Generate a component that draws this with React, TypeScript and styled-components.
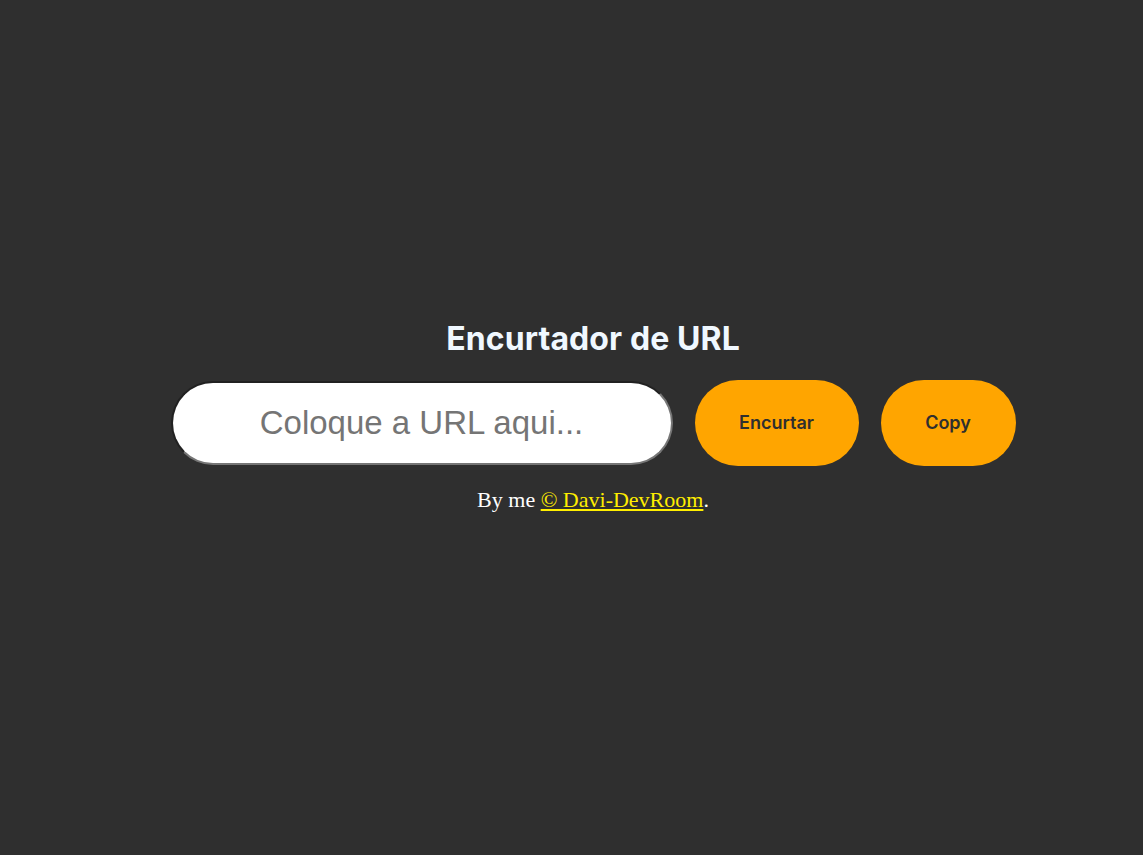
import React from "react";
import styled, { createGlobalStyle } from "styled-components";

const GlobalStyle = createGlobalStyle`
  html, body {
    margin: 0;
    padding: 0;
    background: #2f2f2f;
  }
  body {
    font-family: "Liberation Serif", "Times New Roman", serif;
  }
  * { box-sizing: border-box; }
`;

const Page = styled.main`
  min-height: 100vh;
  display: flex;
  flex-direction: column;
  align-items: center;
  justify-content: center;
  padding: 0 0 25px 43px;
`;

const Title = styled.h1`
  margin: 0;
  font-family: Inter, "Noto Sans", sans-serif;
  font-weight: 700;
  font-size: 32px;
  letter-spacing: 0.1px;
  line-height: 39px;
  color: #f0f8ff;
`;

const Row = styled.div`
  display: flex;
  align-items: center;
  gap: 22px;
  margin-top: 22px;
`;

const UrlInput = styled.input`
  width: 502px;
  height: 84px;
  border: 2px inset #767676;
  border-radius: 42px;
  background: #fff;
  font-family: "Liberation Sans", Arial, sans-serif;
  font-size: 33px;
  text-align: center;
  color: #222;
  outline: none;
  &::placeholder {
    color: #757575;
  }
`;

const Button = styled.button<{ $w: number }>`
  width: ${(p) => p.$w}px;
  height: 86px;
  border: none;
  border-radius: 43px;
  background: #ffa500;
  color: #2f2f2f;
  font-family: Inter, "Noto Sans", sans-serif;
  font-weight: 600;
  font-size: 18px;
  cursor: pointer;
`;

const Footer = styled.p`
  margin: 21px 0 0;
  font-size: 22px;
  line-height: 25px;
  color: #fff;
`;

const Link = styled.a`
  color: #ffee00;
  text-decoration: underline;
`;

export default function App() {
  return (
    <>
      <GlobalStyle />
      <Page>
        <Title>Encurtador de URL</Title>
        <Row>
          <UrlInput type="text" placeholder="Coloque a URL aqui..." />
          <Button $w={164}>Encurtar</Button>
          <Button $w={135}>Copy</Button>
        </Row>
        <Footer>
          By me <Link href="#">© Davi-DevRoom</Link>.
        </Footer>
      </Page>
    </>
  );
}
